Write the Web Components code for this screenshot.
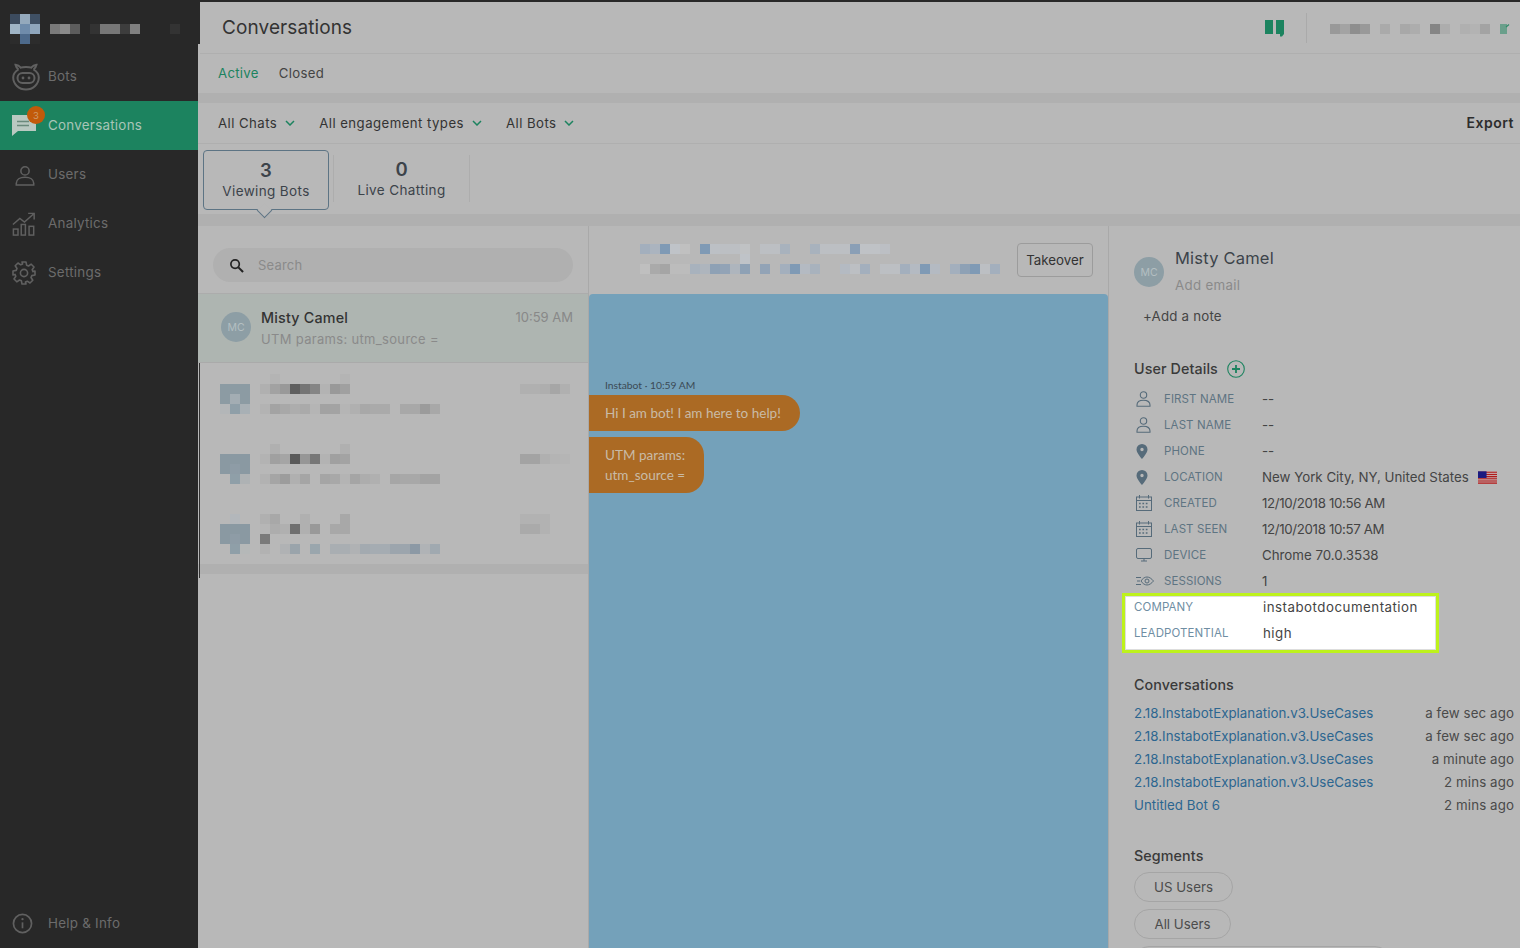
<!DOCTYPE html>
<html><head><meta charset="utf-8"><title>Conversations</title>
<style>
html,body{margin:0;padding:0;height:948px;overflow:hidden;background:#b8b8b8;font-family:Inter,"Liberation Sans",sans-serif}
</style></head><body>
<app-shell>
  <side-nav slot="nav"></side-nav>
  <top-header></top-header>
  <tab-bar></tab-bar>
  <filter-bar></filter-bar>
  <stat-bar></stat-bar>
  <div style="display:flex;flex:1;min-height:0">
    <chat-list></chat-list>
    <chat-view></chat-view>
    <user-panel></user-panel>
  </div>
</app-shell>
<script>
const ICONS={
bot:'<svg viewBox="0 0 28 28" fill="none" stroke="currentColor" stroke-width="2"><path d="M6.500 6.500C5 5.500 4 4 3.500 1.800c1.700.2 4 1.400 5.300 2.900C10 4.200 12 4 14 4s4 .2 5.200.7c1.300-1.500 3.600-2.700 5.300-2.900-.5 2.200-1.500 3.700-3 4.700"/><path d="M6.500 6.500C3.200 8.500 1.200 11 1.200 14.500c0 6.500 5.700 12 12.800 12s12.800-5.500 12.800-12c0-3.500-2-6-5.300-8"/><rect x="5.500" y="10" width="17" height="10" rx="5"/><circle cx="11" cy="15" r="1.400" fill="currentColor" stroke="none"/><circle cx="17" cy="15" r="1.400" fill="currentColor" stroke="none"/></svg>',
chat:'<svg viewBox="1 2 24 21"><path fill="#b9c9c1" d="M1 2h24v16H7l-6 5z"/><path stroke="#6a8a7c" stroke-width="1.500" d="M6 8.500h12M6 12.500h12"/></svg>',
user:'<svg viewBox="0 0 24 24" fill="none" stroke="currentColor" stroke-width="1.700"><circle cx="12" cy="7.500" r="4.500"/><path d="M2.500 23v-2c0-4 4-6.500 9.500-6.500s9.500 2.500 9.500 6.500v2z"/></svg>',
chart:'<svg viewBox="0 0 26 26" fill="none" stroke="currentColor" stroke-width="1.600"><path d="M1 13.500 8.500 7l5 4L23 2.500M17.500 1.500H24V8"/><rect x="1.500" y="18.500" width="5" height="6.500"/><rect x="10" y="13.500" width="4.500" height="11.500"/><rect x="18.500" y="15.500" width="5" height="9.500"/></svg>',
gear:'<svg viewBox="0 0 24 24" fill="none" stroke="currentColor" stroke-width="1.600" stroke-linejoin="round"><circle cx="12" cy="12" r="3.600"/><path d="M10 1h4l.6 3.200 1.900.8 2.700-1.800 2.800 2.800-1.800 2.700.8 1.900L23 10v4l-3.200.6-.8 1.900 1.800 2.700-2.800 2.800-2.700-1.800-1.900.8L14 23h-4l-.6-3.200-1.900-.8-2.700 1.800-2.800-2.800 1.800-2.700-.8-1.900L1 14v-4l3.200-.6.8-1.900-1.800-2.700 2.800-2.800 2.700 1.800 1.900-.8z"/></svg>',
info:'<svg viewBox="0 0 22 22" fill="none" stroke="currentColor" stroke-width="1.800"><circle cx="11" cy="11" r="9.500"/><path d="M11 9.800V16"/><circle cx="11" cy="6.500" r="1.200" fill="currentColor" stroke="none"/></svg>',
search:'<svg viewBox="0 0 16 16" fill="none" stroke="#222" stroke-width="1.800"><circle cx="6.500" cy="6.500" r="4.500"/><path d="m10 10 5 5" stroke-width="2.200"/></svg>',
person2:'<svg viewBox="0 0 15 16" fill="none" stroke="currentColor" stroke-width="1.100"><circle cx="7.500" cy="4" r="3.200"/><path d="M1 15.300v-1.200C1 11 3.800 9.300 7.500 9.300S14 11 14 14.100v1.200z"/></svg>',
pin:'<svg viewBox="0 0 12 15"><path fill="currentColor" fill-rule="evenodd" d="M6 0a5.500 5.500 0 0 0-5.500 5.500C.5 9 6 15 6 15s5.500-6 5.500-9.500A5.500 5.500 0 0 0 6 0zm0 3.800a1.700 1.700 0 1 1 0 3.400 1.700 1.700 0 0 1 0-3.400z"/></svg>',
cal:'<svg viewBox="0 0 16 16" fill="none" stroke="currentColor" stroke-width="1"><rect x=".5" y="2" width="15" height="13.500"/><path d="M.5 5.500h15M3.500 0v3.500M12.500 0v3.500"/><path stroke-width="1.600" stroke-dasharray="1.700 1.700" d="M3 8.500h10M3 12h10"/></svg>',
mon:'<svg viewBox="0 0 16 14" fill="none" stroke="currentColor" stroke-width="1"><rect x=".5" y=".5" width="15" height="10" rx="1.500"/><path d="M5 13h6M8 10.500V13"/></svg>',
eye:'<svg viewBox="0 0 18 10" fill="none" stroke="currentColor" stroke-width="1"><path d="M0 1.500h5M1 5h3M0 8.500h5"/><path d="M5 5c1.500-2.500 3.800-4 6-4s4.500 1.500 6.500 4c-2 2.500-4.300 4-6.500 4S6.500 7.500 5 5z"/><circle cx="11" cy="5" r="2"/></svg>',
plus:'<svg viewBox="0 0 18 18" fill="none" stroke="#1c835f"><circle cx="9" cy="9" r="8.300" stroke-width="1.100"/><path stroke-width="1.800" d="M9 5v8M5 9h8"/></svg>',
chev:'<svg viewBox="0 0 10 6" fill="none" stroke="#1c835f" stroke-width="1.500"><path d="m1 1 4 4 4-4"/></svg>',
book:'<svg viewBox="0 0 20 18"><rect x="0" y="1" width="8" height="14" fill="#1c835f"/><rect x="11" y="1" width="8" height="14" fill="#1c835f"/><path fill="#1c835f" d="M15 15h4l-2 2.500h-2z"/></svg>',
ext:'<svg viewBox="0 0 10 10"><rect x="0" y="0" width="7" height="10" fill="#6a9f8b"/><path d="M6 3 9 .5" stroke="#2f8a68" stroke-width="1.200"/></svg>',
flag:'<svg viewBox="0 0 20 13"><rect width="20" height="13" fill="#c4a4a4"/><path stroke="#b01c1c" stroke-width="1.100" d="M0 1h20M0 3.300h20M0 5.600h20M0 7.900h20M0 10.200h20M0 12.400h20"/><rect width="9" height="7" fill="#1a1a80"/></svg>'
};
class El extends HTMLElement{
  constructor(){super();this.attachShadow({mode:'open'})}
  connectedCallback(){if(!this.done){this.done=1;this.shadowRoot.innerHTML=this.view()}}
  a(n,d=''){return this.getAttribute(n)??d}
}
customElements.define('x-icon',class extends El{view(){
  const w=this.a('w','16'),h=this.a('h',w);
  return `<style>:host{display:inline-flex;width:${w}px;height:${h}px;flex:none}svg{width:100%;height:100%;display:block}</style>${ICONS[this.a('name')]}`}});
customElements.define('px-block',class extends El{view(){
  const rows=this.a('cells').split('/').map(r=>'<div class="r">'+r.trim().split(/\s+/).map(c=>`<i style="background:${c=='.'?'transparent':'#'+c}"></i>`).join('')+'</div>').join('');
  return `<style>:host{display:block;flex:none}.r{display:flex;height:10px}i{display:block;width:10px;height:10px;flex:none}</style>${rows}`}});
customElements.define('app-shell',class extends El{view(){
  return `<style>:host{display:flex;height:948px;width:1520px;border-top:2px solid #282828;box-sizing:border-box;color:#3a3a3a}
  main{flex:1;min-width:0;display:flex;flex-direction:column;overflow:hidden}</style>
  <slot name="nav"></slot><main><slot></slot></main>`}});
customElements.define('nav-item',class extends El{view(){
  const on=this.hasAttribute('on');
  return `<style>:host{display:flex;align-items:center;height:49px;box-sizing:border-box;padding-left:${this.a('pad','12')}px;position:relative;color:#606060;background:${on?'#1c835f':'none'}}
  .ic{width:${this.a('icw','36')}px;display:flex;flex:none}
  span.t{font-size:13.400px;color:${on?'#a8c5b7':'#6c6c6c'};letter-spacing:.25px;padding-bottom:2px}
  .b{position:absolute;left:27px;top:5px;width:18px;height:18px;border-radius:50%;background:#c25a0a;color:#cf9a6c;font-size:9.500px;display:flex;align-items:center;justify-content:center}</style>
  <div class="ic"><slot></slot></div><span class="t">${this.a('label')}</span>${this.a('badge')?`<span class="b">${this.a('badge')}</span>`:''}`}});
customElements.define('side-nav',class extends El{view(){
  return `<style>:host{display:flex;flex-direction:column;width:198px;flex:none;background:#282828;height:946px}
  .logo{padding:12px 0 0 10px;box-sizing:border-box;height:50px;display:flex;gap:10px;box-shadow:2px -8px 0 #282828}
  .logo-t{margin-top:10px}
  .sp{flex:1}</style>
  <div class="logo"><px-block cells="3c4b5e 94a9bc 3f5064/9fb4c6 6f8cab 8fa6bc/2c2c2c 4d6a8b 2c2c2c"></px-block><px-block class="logo-t" cells="7a7a7a 8a8a8a 5c5c5c . 333 777 777 3d3d3d 808080 . . . 333"></px-block></div>
  <nav-item label="Bots"><x-icon name="bot" w="28"></x-icon></nav-item>
  <nav-item label="Conversations" on badge="3"><x-icon name="chat" w="24" h="21"></x-icon></nav-item>
  <nav-item label="Users" pad="14" icw="34"><x-icon name="user" w="22"></x-icon></nav-item>
  <nav-item label="Analytics"><x-icon name="chart" w="24"></x-icon></nav-item>
  <nav-item label="Settings"><x-icon name="gear" w="24"></x-icon></nav-item>
  <div class="sp"></div>
  <nav-item label="Help &amp; Info"><x-icon name="info" w="21"></x-icon></nav-item>`}});
customElements.define('top-header',class extends El{view(){
  return `<style>:host{display:flex;align-items:center;height:52px;box-sizing:border-box;margin-left:2px;padding-left:22px;border-bottom:1px solid #afafaf;flex:none}
  h1{font-size:19px;font-weight:400;margin:0 0 1px;color:#333;letter-spacing:.1px;flex:1}
  .d{width:1px;height:30px;background:#aaa;margin:0 23px 0 21px}
  px-block{margin-top:2px}x-icon.e{margin:2px 10px 0 0}</style>
  <h1>Conversations</h1><x-icon name="book" w="20" h="18"></x-icon><div class="d"></div>
  <px-block cells="999 a3a3a3 8e8e8e 999 . aaa . a8a8a8 adadad . 858585 adadad . b0b0b0 b3b3b3 a3a3a3 ."></px-block><x-icon class="e" name="ext" w="10" h="10"></x-icon>`}});
customElements.define('tab-bar',class extends El{view(){
  return `<style>:host{display:flex;align-items:center;gap:20px;height:37px;padding-bottom:2px;flex:none;padding-left:20px;font-size:13.200px;letter-spacing:.3px;border-bottom:10px solid #b0b0b0;box-sizing:content-box}
  .a{color:#1c835f}.c{color:#444}</style><span class="a">Active</span><span class="c">Closed</span>`}});
customElements.define('filter-bar',class extends El{view(){
  return `<style>:host{display:flex;align-items:center;height:40px;flex:none;padding:0 6px 0 20px;font-size:13.200px;letter-spacing:.45px;color:#333;border-bottom:1px solid #afafaf}
  .f{display:flex;align-items:center;gap:8px;margin-right:24px}
  .e{margin-left:auto;font-weight:600;font-size:14px;letter-spacing:.5px;color:#2d2d2d;padding-bottom:2px}</style>
  <span class="f">All Chats<x-icon name="chev" w="10" h="6"></x-icon></span>
  <span class="f">All engagement types<x-icon name="chev" w="10" h="6"></x-icon></span>
  <span class="f">All Bots<x-icon name="chev" w="10" h="6"></x-icon></span>
  <span class="e">Export</span>`}});
customElements.define('stat-bar',class extends El{view(){
  return `<style>:host{display:flex;height:70px;box-sizing:content-box;flex:none;border-bottom:12px solid #b0b0b0;padding-left:5px;position:relative;color:#3c434a}
  .s{display:flex;flex-direction:column;align-items:center;justify-content:center;box-sizing:border-box;margin-top:6px;height:60px}
  .on{width:126px;border:1px solid #5d7484;border-radius:4px;position:relative}
  .off{width:137px;margin-left:4px;border-left:1px solid #adadad;border-right:1px solid #adadad;height:47px;margin-top:11px;padding-top:1px}
  b{font-weight:600;font-size:18.500px;line-height:22px}
  span{font-size:13.500px;line-height:20px;letter-spacing:.37px}
  .caret{position:absolute;left:55px;bottom:-7px;width:10px;height:10px;background:#b8b8b8;border-right:1px solid #5d7484;border-bottom:1px solid #5d7484;transform:rotate(45deg)}
  </style>
  <div class="s on"><b>3</b><span>Viewing Bots</span><i class="caret"></i></div>
  <div class="s off"><b>0</b><span>Live Chatting</span></div>`}});
customElements.define('chat-row',class extends El{view(){
  return `<style>:host{display:flex;height:70px;box-sizing:border-box;padding:10px 0 0 22px;position:relative}
  .tx{margin-left:10px;width:180px}.tm{margin-left:auto;margin-right:18px}</style>
  <px-block class="av" cells="${this.a('av')}"></px-block><px-block class="tx" cells="${this.a('tx')}"></px-block><px-block class="tm" cells="${this.a('tm')}"></px-block>`}});
customElements.define('chat-list',class extends El{view(){
  return `<style>:host{display:block;width:391px;flex:none;border-right:1px solid #a9a9a9;box-sizing:border-box}
  .se{height:68px;border-bottom:1px solid #acacac;box-sizing:border-box;padding:22px 15px 0}
  .pill{height:34px;border-radius:17px;background:#b0b0b0;display:flex;align-items:center;padding-left:16px;gap:14px;font-size:13px;color:#8a8a8a;letter-spacing:.2px}
  .sel{height:69px;background:#aeb5b1;border-bottom:1px solid #aaa;box-sizing:border-box;display:flex;padding:0 15px 2px 23px;align-items:center;gap:10px}
  .av{width:30px;height:30px;border-radius:50%;background:#8d9ea5;color:#b4bfc2;font-size:10.500px;display:flex;align-items:center;justify-content:center;flex:none}
  .m{flex:1}.top{display:flex;justify-content:space-between;align-items:center;height:20px}
  .n{font-size:14.300px;color:#333;font-weight:500;letter-spacing:.2px}.tm{font-size:13px;color:#888}
  .sub{font-size:13px;color:#8a8a8a;margin-top:4px;letter-spacing:.32px}
  .rows{position:relative;padding-top:1px;height:201px;box-sizing:border-box}
  .rows::before{content:"";position:absolute;left:1px;top:0;height:215px;width:1px;background:#333;z-index:2}
  .band{height:10px;background:#b0b0b0}</style>
  <div class="se"><div class="pill"><x-icon name="search" w="15"></x-icon><span>Search</span></div></div>
  <div class="sel"><div class="av">MC</div><div class="m"><div class="top"><span class="n">Misty Camel</span><span class="tm">10:59 AM</span></div><div class="sub">UTM params: utm_source =</div></div></div>
  <div class="rows">
   <chat-row av=". . ./8c9ba3 8c9ba3 8c9ba3/8c9ba3 a3adb3 8c9ba3/b3b6b8 8f9fa8 a8b0b5"
     tx=". b4b4b4 . . . . . . b4b4b4/b0b0b0 a2a2a2 999 5f5f5f 757575 858585 b3b3b3 999 a0a0a0/. . . . . . . . . . . . . . . . . ./b3b3b3 a3a3a3 a8a8a8 adadad aaa b5b5b5 a2a2a2 a3a3a3 b5b5b5 b0b0b0 a8a8a8 aaa aaa . a8a8a8 a8a8a8 9b9b9b a8a8a8"
     tm=". . . . ./b0b0b0 b0b0b0 aeaeae a6a6a6 b0b0b0"></chat-row>
   <chat-row av=". . ./8a99a2 8a99a2 8a99a2/8a99a2 8e9ca6 8a99a2/. 8f9fa8 aeb2b4"
     tx=". b0b0b0 . . . . . . b0b0b0/b3b3b3 a0a0a0 a5a5a5 5a5a5a 969696 777 b3b3b3 a0a0a0 a3a3a3/. . . . . . . . . . . . . . . . . ./b2b2b2 a5a5a5 9c9c9c b0b0b0 a5a5a5 . a5a5a5 a8a8a8 b4b4b4 a5a5a5 adadad b0b0b0 . a6a6a6 a8a8a8 a8a8a8 a3a3a3 a3a3a3"
     tm=". . . . ./a3a3a3 a3a3a3 b0b0b0 b4b4b4 b5b5b5"></chat-row>
   <chat-row av=". b3b7bb ./8a99a2 8a99a2 8a99a2/8a99a2 8e9ca6 8a99a2/. 8f9fa8 b5b8b8"
     tx="b0b0b0 a8a8a8 . . b0b0b0 . . . a8a8a8/b6b6b6 adadad b0b0b0 707070 b0b0b0 999 . a8a8a8 a8a8a8/7a7a7a . . . . . . . ./b2b2b2 . b0b2b4 9aa4ab . 9aa6ad . a9aeb2 a9aeb2 b0b2b4 a3aab0 a5acb2 a5acb2 9ca5ad 9ca5ad 8c99a5 b0b3b6 a0a9b0"
     tm="b2b2b2 b2b2b2 b2b2b2 . ./aaa aaa b2b2b2 . ."></chat-row>
  </div>
  <div class="band"></div>`}});
customElements.define('chat-view',class extends El{view(){
  const r1='a3afbd abb4bf 7f9ab5 bfc3c8 c0c0c0 . 7f9ab5 bcc0c5 bcbfc3 bcbfc3 c0c2c4 . bcbfc3 bcbfc3 a8b2bd . . a8b2bd bcbfc3 bcbfc3 bcbfc3 8a9fb6 bfc2c6 bfc2c6 bcbfc4';
  const r2='. . . . . . . . . . bfc3c8';
  const r3='bfbfbf aaa a5a5a5 bcbcbc bcbcbc a8b2bd aeb5bd 8ea1b5 92a3b6 aeb5bd 8ea1b5 . 92a3b6 . a3afbd 7f9ab5 b4bac2 a8b2bd . . b4bac2 bcbfc3 a3afbd . bcbfc3 bcbfc3 a3afbd b4bac2 7f9ab5 b4bac2 . a3afbd 8ea1b5 7f9ab5 bcbfc3 a3afbd';
  return `<style>:host{display:flex;flex-direction:column;width:520px;flex:none;border-right:1px solid #a9a9a9;box-sizing:border-box;min-height:0}
  .h{height:68px;display:flex;padding:18px 15px 0 51px;box-sizing:border-box;flex:none;justify-content:space-between}
  button{font:13.300px Inter,sans-serif;color:#333;width:76px;height:34px;background:none;border:1px solid #9c9c9c;border-radius:4px;padding:0;margin-top:-1px}
  .c{flex:1;background:#74a1ba;border-radius:4px 4px 0 0;padding-top:85px;font-family:Lato,sans-serif}
  .meta{font-size:10.300px;color:#3b4a55;padding-left:16px;line-height:13px;margin-bottom:3px}
  .b{background:#ab6a24;color:#c9bba6;font-size:13.500px;line-height:20px;padding:8px 19px 8px 16px;border-radius:0 18px 18px 0;width:fit-content;margin-bottom:6px}</style>
  <div class="h"><px-block cells="${r1}/${r2}/${r3}"></px-block><button>Takeover</button></div>
  <div class="c"><div class="meta">Instabot · 10:59 AM</div><div class="b">Hi I am bot! I am here to help!</div><div class="b">UTM params:<br>utm_source =</div></div>`}});
customElements.define('detail-row',class extends El{view(){
  const ic=this.a('icon'),hl=this.hasAttribute('plain');
  const sz={person2:[15,16],pin:[12,15],cal:[16,16],mon:[16,14],eye:[18,10]}[ic];
  return `<style>:host{display:flex;align-items:center;height:26px;font-size:11.500px}
  .i{width:${hl?0:30}px;display:flex;padding-left:${hl?0:2}px;box-sizing:border-box;color:#566b7a;flex:none}
  .l{width:${hl?129:98}px;color:${hl?'#6f8ea3':'#5e7482'};flex:none;letter-spacing:.1px}
  .v{font-size:13.300px;color:#444;white-space:nowrap;display:flex;align-items:center;gap:9px;letter-spacing:${this.a('ls',hl?'.5':'0')}px}</style>
  ${hl?'':`<div class="i"><x-icon name="${ic}" w="${sz[0]}" h="${sz[1]}"></x-icon></div>`}
  <div class="l">${this.a('label')}</div><div class="v"><slot></slot></div>`}});
customElements.define('conv-row',class extends El{view(){
  return `<style>:host{display:flex;justify-content:space-between;height:23px;align-items:center;font-size:13.300px}
  a{color:#2c6690;text-decoration:none;letter-spacing:.03px}span{color:#4a4a4a;letter-spacing:.1px}</style><a>${this.a('name')}</a><span>${this.a('time')}</span>`}});
customElements.define('seg-pill',class extends El{view(){
  return `<style>:host{display:flex;align-items:center;justify-content:center;box-sizing:border-box;height:30px;width:${this.a('w')}px;border:1px solid #a5a5a5;border-radius:15px;font-size:13.300px;color:#4c4c4c;margin-bottom:7px;flex:none}</style><slot></slot>`}});
customElements.define('user-panel',class extends El{view(){
  return `<style>:host{display:block;flex:1;padding:0 6px 0 25px;min-width:0;box-sizing:border-box;overflow:hidden;color:#3a3a3a}
  .top{display:flex;gap:11px;height:66px;padding-top:22px}
  .av{width:30px;height:30px;border-radius:50%;background:#8d9ea5;color:#b4bfc2;font-size:10.500px;display:flex;align-items:center;justify-content:center;margin-top:9px}
  .n{font-size:16.500px;color:#3c434a;line-height:20px;letter-spacing:.2px}.em{font-size:13.300px;color:#8a8a8a;line-height:20px;margin-top:7px;letter-spacing:.3px}
  .note{font-size:13.300px;color:#444;padding-left:9px;margin-top:-7px;height:43px;line-height:18px;letter-spacing:.2px}
  h3{font-size:14.300px;font-weight:500;margin:0;color:#3a3a3a;line-height:20px;letter-spacing:.1px}
  .ud{display:flex;align-items:center;gap:9px;margin-top:9px;height:20px;margin-bottom:7px}
  .hl{margin:-1px 0 22px -12px;width:317px;height:60px;box-sizing:border-box;border:3px solid #bdf21c;background:#fff;box-shadow:inset 0 0 0 1px #ddd;padding:0 0 0 9px}
  .hl detail-row{width:290px}
  .hl detail-row:first-child{margin-top:-2px}
  .segs{display:flex;flex-direction:column;margin-top:6px}</style>
  <div class="top"><div class="av">MC</div><div><div class="n">Misty Camel</div><div class="em">Add email</div></div></div>
  <div class="note">+Add a note</div>
  <div class="ud"><h3>User Details</h3><x-icon name="plus" w="18"></x-icon></div>
  <detail-row icon="person2" label="FIRST NAME">--</detail-row>
  <detail-row icon="person2" label="LAST NAME">--</detail-row>
  <detail-row icon="pin" label="PHONE">--</detail-row>
  <detail-row icon="pin" label="LOCATION">New York City, NY, United States <x-icon name="flag" w="19" h="13"></x-icon></detail-row>
  <detail-row icon="cal" label="CREATED" ls="-.35">12/10/2018 10:56 AM</detail-row>
  <detail-row icon="cal" label="LAST SEEN" ls="-.35">12/10/2018 10:57 AM</detail-row>
  <detail-row icon="mon" label="DEVICE">Chrome 70.0.3538</detail-row>
  <detail-row icon="eye" label="SESSIONS">1</detail-row>
  <div class="hl"><detail-row plain label="COMPANY">instabotdocumentation</detail-row><detail-row plain label="LEADPOTENTIAL">high</detail-row></div>
  <h3>Conversations</h3>
  <div style="margin-top:6px;margin-bottom:30px">
  <conv-row name="2.18.InstabotExplanation.v3.UseCases" time="a few sec ago"></conv-row>
  <conv-row name="2.18.InstabotExplanation.v3.UseCases" time="a few sec ago"></conv-row>
  <conv-row name="2.18.InstabotExplanation.v3.UseCases" time="a minute ago"></conv-row>
  <conv-row name="2.18.InstabotExplanation.v3.UseCases" time="2 mins ago"></conv-row>
  <conv-row name="Untitled Bot 6" time="2 mins ago"></conv-row></div>
  <h3>Segments</h3>
  <div class="segs"><seg-pill w="99">US Users</seg-pill><seg-pill w="97">All Users</seg-pill><seg-pill w="256"></seg-pill></div>`}});
</script>
</body></html>
